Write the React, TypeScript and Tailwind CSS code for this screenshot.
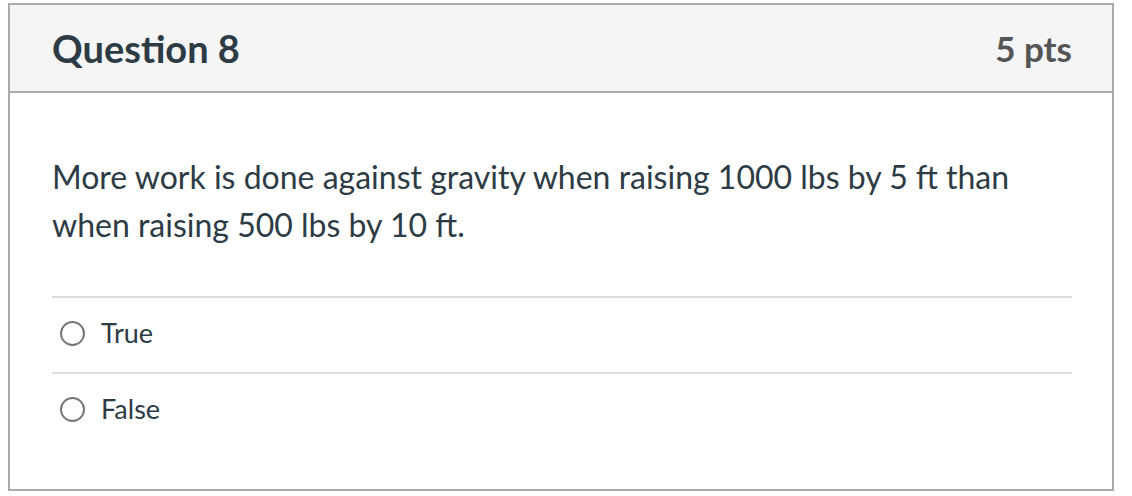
import React from 'react';

const answers = ['True', 'False'];

export default function App() {
  return (
    <div className="w-[1132px] h-[496px] bg-white pt-[3px] pl-[8px]" style={{ fontFamily: 'Lato, "Open Sans", sans-serif' }}>
      <div className="w-[1106px] h-[488px] border-2 border-[#aaaaaa] flex flex-col">
        <div className="h-[88px] shrink-0 bg-[#f5f5f5] border-b-2 border-[#aaaaaa] flex items-center justify-between pl-[42px] pr-[40px]">
          <h2 className="text-[38px] font-bold text-[#2d3b45] leading-none">Question 8</h2>
          <span className="text-[35px] font-bold text-[#555555] leading-none">5 pts</span>
        </div>
        <div className="px-[42px] pt-[60px]">
          <p className="text-[32px] leading-[48px] text-[#2d3b45] mb-[47px]">
            More work is done against gravity when raising 1000 lbs by 5 ft than when raising 500 lbs by 10 ft.
          </p>
          <div className="w-[1020px]">
            {answers.map((a) => (
              <div key={a} className="border-t-2 border-[#dddddd] h-[76px] pb-[4px] flex items-center pl-[8px]">
                <span className="w-[25px] h-[25px] rounded-full border-2 border-[#777777] bg-white shrink-0" />
                <span className="ml-[16px] text-[27px] text-[#2d3b45]">{a}</span>
              </div>
            ))}
          </div>
        </div>
      </div>
    </div>
  );
}
